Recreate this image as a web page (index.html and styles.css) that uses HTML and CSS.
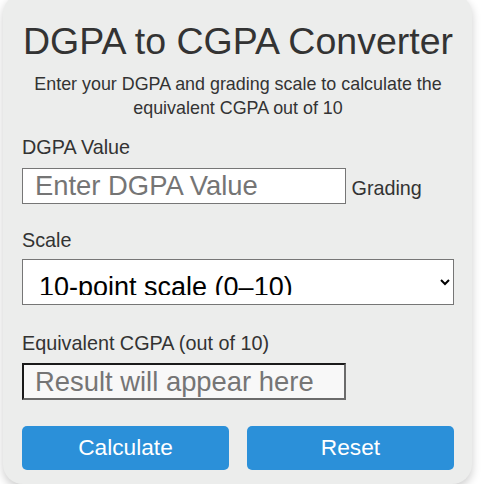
FILE: index.html
```html
<!DOCTYPE html>
<html lang="en">
<head>
  <meta charset="UTF-8">
  <meta name="viewport" content="width=device-width, initial-scale=1.0">
  <title>DGPA to CGPA Converter</title>
  <link rel="stylesheet" href="styles.css">
</head>
<body>
  <div class="converter">
    <h1>DGPA to CGPA Converter</h1>
    <p class="intro">Enter your DGPA and grading scale to calculate the equivalent CGPA out of 10</p>

    <label class="field-label" for="dgpa">DGPA Value</label>
    <div class="inline-row">
      <input type="number" id="dgpa" class="text-input" placeholder="Enter DGPA Value">
      <label for="scale">Grading Scale</label>
    </div>
    <select id="scale" class="scale-select">
      <option>10-point scale (0–10)</option>
      <option>4-point scale (0–4)</option>
      <option>5-point scale (0–5)</option>
    </select>

    <label class="field-label result-label" for="cgpa">Equivalent CGPA (out of 10)</label>
    <input type="text" id="cgpa" class="text-input result" placeholder="Result will appear here" readonly>

    <div class="actions">
      <button class="btn" id="calcBtn">Calculate</button>
      <button class="btn" id="resetBtn">Reset</button>
    </div>
  </div>

  <script>
    // Convert DGPA on the chosen scale to a CGPA out of 10
    const dgpa = document.getElementById('dgpa');
    const scale = document.getElementById('scale');
    const cgpa = document.getElementById('cgpa');

    document.getElementById('calcBtn').addEventListener('click', () => {
      const value = parseFloat(dgpa.value);
      const max = [10, 4, 5][scale.selectedIndex];
      if (isNaN(value) || value < 0 || value > max) {
        cgpa.value = 'Invalid DGPA';
        return;
      }
      cgpa.value = (value / max * 10).toFixed(2);
    });

    document.getElementById('resetBtn').addEventListener('click', () => {
      dgpa.value = '';
      cgpa.value = '';
      scale.selectedIndex = 0;
    });
  </script>
</body>
</html>
```

FILE: styles.css
```css
/* Reset */
* {
  box-sizing: border-box;
}

body {
  margin: 0;
  background: #fff;
  font-family: "Liberation Sans", Arial, sans-serif;
  color: #333;
}

/* Card */
.converter {
  width: 469px;
  margin: -6px 0 0 3px;
  padding: 26px 18px 14px 19px;
  background-color: #ecedec;
  border-radius: 20px;
  box-shadow: 0 4px 10px rgba(0, 0, 0, 0.2);
}

.converter h1 {
  margin: 0 0 10px;
  font-size: 37.5px;
  line-height: 42px;
  font-weight: normal;
  text-align: center;
}

.intro {
  margin: 0 0 16px;
  font-size: 17.9px;
  line-height: 24px;
  text-align: center;
}

/* Form fields */
.field-label {
  display: block;
  margin-bottom: 10px;
  font-size: 19.8px;
  line-height: 22px;
}

.inline-row {
  font-size: 19.8px;
  line-height: 22px;
}

.text-input {
  width: 324px;
  height: 36px;
  margin: 0 0 25px;
  padding: 0 12px;
  border: 1px solid #767676;
  background: #fff;
  font-family: inherit;
  font-size: 27.4px;
  color: #333;
}

.text-input::placeholder {
  color: #757575;
}

.scale-select {
  display: block;
  width: 100%;
  height: 46px;
  margin: 8px 0 27px;
  padding: 11px 10px 9px 12px;
  border: 1px solid #767676;
  border-radius: 0;
  background-color: #fff;
  font-family: inherit;
  font-size: 27px;
  color: #000;
}

.result-label {
  margin-bottom: 9px;
}

.result {
  display: block;
  height: 37px;
  margin-bottom: 26px;
  padding: 0 11px;
  border-width: 2px;
  border-style: solid;
  border-color: #1a1a1a #6b6b6b #6b6b6b #1a1a1a;
  background: #f8f8f8;
}

/* Buttons */
.actions {
  display: flex;
  gap: 18px;
}

.btn {
  flex: 1;
  height: 44px;
  padding: 0 0 2px;
  border: none;
  border-radius: 5px;
  background-color: #2b90d9;
  color: #fff;
  font-family: inherit;
  font-size: 22.7px;
  cursor: pointer;
}
```
